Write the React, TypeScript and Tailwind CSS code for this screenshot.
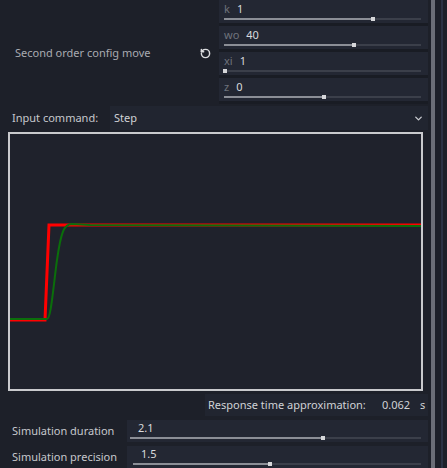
import { RotateCcw, ChevronDown } from "lucide-react";

type SliderProps = { pct: number; className?: string };

function Track({ pct, className }: SliderProps) {
  return (
    <div className={"relative h-[2px] bg-[#3b3f4a] " + (className ?? "")}>
      <div className="absolute left-0 top-0 h-[2px] bg-[#8b8e96]" style={{ width: pct + "%" }} />
      <div
        className="absolute top-[-1px] w-[4px] h-[4px] bg-[#d6d7da]"
        style={{ left: `calc(${pct}% - 2px)` }}
      />
    </div>
  );
}

function ParamRow({ name, value, pct }: { name: string; value: string; pct: number }) {
  return (
    <div className="h-[23px] bg-[#232733] pl-[5px] pr-[7px] flex flex-col justify-end pb-[3px]">
      <div className="flex items-center gap-[7px] text-[11px] leading-[14px] mb-[2px]">
        <span className="text-[#6f737c]">{name}</span>
        <span className="text-[#d9dadd]">{value}</span>
      </div>
      <Track pct={pct} />
    </div>
  );
}

function SimRow({ label, value, pct, left }: { label: string; value: string; pct: number; left: string }) {
  return (
    <div className="flex h-[22px] items-stretch">
      <div className="w-[127px] pl-[12px] flex items-center text-[11px] text-[#c6c8cd]">{label}</div>
      <div className={"flex-1 bg-[#232733] flex flex-col justify-end pb-[3px] pr-[7px] " + left}>
        <div className="text-[11px] leading-[14px] text-[#d9dadd] mb-[2px] pl-[8px]">{value}</div>
        <Track pct={pct} />
      </div>
    </div>
  );
}

export default function App() {
  return (
    <div
      className="w-[447px] h-[468px] bg-[#1d2029] flex overflow-hidden"
      style={{ fontFamily: '"Noto Sans", sans-serif' }}
    >
      <div className="w-[428px] flex flex-col">
        {/* second order config */}
        <div className="flex h-[104px]">
          <div className="w-[219px] flex items-center pl-[15px] pr-[8px]">
            <span className="flex-1 text-[11px] text-[#a9abb1] pt-[2px]">Second order config move</span>
            <RotateCcw size={11} strokeWidth={3.2} className="text-[#dcdde0] mt-[3px]" />
          </div>
          <div className="flex-1 flex flex-col gap-[3px] bg-[#191c24] pb-[3px]">
            <ParamRow name="k" value="1" pct={75.6} />
            <ParamRow name="wo" value="40" pct={65.8} />
            <ParamRow name="xi" value="1" pct={0.6} />
            <ParamRow name="z" value="0" pct={50.8} />
          </div>
        </div>

        {/* input command */}
        <div className="flex h-[24px] mt-[2px] items-stretch">
          <div className="w-[110px] pl-[12px] flex items-center text-[11px] text-[#c6c8cd]">Input command:</div>
          <div className="flex-1 bg-[#212530] flex items-center pl-[4px] pr-[4px] text-[11px] text-[#d0d2d6]">
            <span className="flex-1">Step</span>
            <ChevronDown size={11} strokeWidth={3} className="text-[#c9cbd0]" />
          </div>
        </div>

        {/* chart */}
        <div className="ml-[8px] mt-[2px] w-[415px] h-[259px] border-2 border-[#c9cacd] bg-[#1f222c]">
          <svg width="411" height="255" viewBox="0 0 411 255">
            <polyline
              points="0,186 35,186 39,91 411,91"
              fill="none"
              stroke="#ff0000"
              strokeWidth="3"
            />
            <path
              d="M0 185 L37 185 C41 185 43 155 47 126 C51 98 54 90 62 90 L80 91 L411 92"
              fill="none"
              stroke="#0b6e0b"
              strokeWidth="2"
            />
          </svg>
        </div>

        {/* response */}
        <div className="flex justify-end mt-[3px]">
          <div className="w-[223px] h-[22px] bg-[#212530] flex items-center pl-[3px] text-[11px] text-[#d0d2d6]">
            <span className="w-[174px] shrink-0">Response time approximation:</span>
            <span className="w-[38px] shrink-0">0.062</span>
            <span>s</span>
          </div>
        </div>

        <div className="mt-[4px] flex flex-col gap-[4px]">
          <SimRow label="Simulation duration" value="2.1" pct={66.4} left="pl-[3px]" />
          <SimRow label="Simulation precision" value="1.5" pct={47.6} left="pl-[6px]" />
        </div>
      </div>

      {/* scrollbar */}
      <div className="w-[19px] flex">
        <div className="w-[3px]" />
        <div className="w-[4px] bg-[#6b6e77]" />
        <div className="w-[6px]" />
        <div className="w-[2px] bg-[#2b3244]" />
      </div>
    </div>
  );
}
